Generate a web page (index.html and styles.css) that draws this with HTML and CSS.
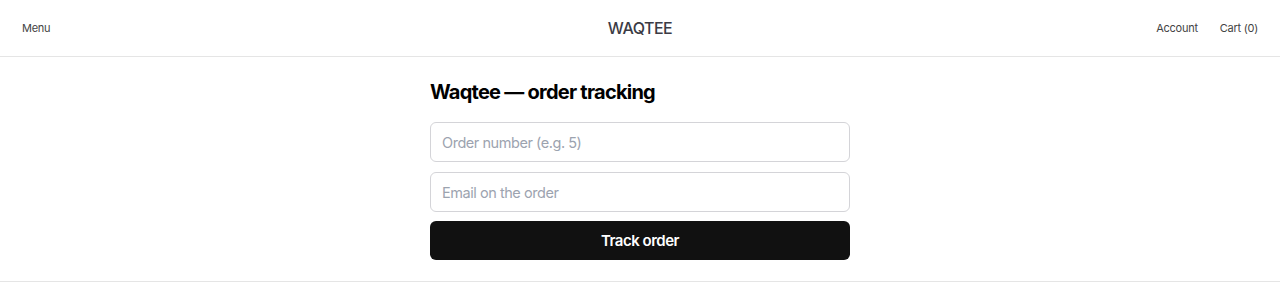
FILE: index.html
```html
<!DOCTYPE html>
<html lang="en">
<head>
    <meta charset="UTF-8">
    <meta name="viewport" content="width=device-width, initial-scale=1.0">
    <title>Waqtee — order tracking</title>
    <link rel="stylesheet" href="styles.css">
</head>
<body>

<header class="site-header">
    <a href="#" class="nav-link">Menu</a>
    <a href="#" class="logo">WAQTEE</a>
    <nav class="nav-right">
        <a href="#" class="nav-link">Account</a>
        <a href="#" class="nav-link">Cart (0)</a>
    </nav>
</header>

<main class="tracking">
    <h1>Waqtee — order tracking</h1>
    <form class="track-form">
        <input type="text" placeholder="Order number (e.g. 5)">
        <input type="email" placeholder="Email on the order">
        <button type="submit">Track order</button>
    </form>
</main>

<footer class="site-footer"></footer>

</body>
</html>
```

FILE: styles.css
```css
* {
    box-sizing: border-box;
}

body {
    margin: 0;
    font-family: Inter, "Noto Sans", sans-serif;
    color: #111;
    background: #fff;
}

/* Header */
.site-header {
    height: 57px;
    display: flex;
    align-items: center;
    justify-content: space-between;
    padding: 0 22px;
    border-bottom: 1px solid #e5e5e5;
    position: relative;
}

.nav-link {
    font-size: 11px;
    letter-spacing: -0.25px;
    color: #444;
    text-decoration: none;
}

.nav-right {
    display: flex;
    gap: 22px;
}

.logo {
    position: absolute;
    left: 50%;
    transform: translateX(-50%);
    font-size: 16px;
    font-weight: 500;
    letter-spacing: -0.5px;
    color: #3b3b45;
    text-decoration: none;
}

/* Formulaire de suivi */
.tracking {
    width: 420px;
    margin: 0 auto;
    padding: 23px 0 21px;
}

.tracking h1 {
    margin: 0 0 18px;
    font-size: 20px;
    line-height: 24px;
    font-weight: 700;
    letter-spacing: -0.75px;
    color: #000;
}

.track-form {
    display: flex;
    flex-direction: column;
}

.track-form input {
    height: 40px;
    margin-bottom: 10px;
    padding: 0 11px;
    border: 1px solid #d4d4d8;
    border-radius: 6px;
    font-family: inherit;
    font-size: 14.5px;
    letter-spacing: -0.45px;
    color: #111;
}

.track-form input:nth-of-type(2) {
    margin-bottom: 9px;
}

.track-form input::placeholder {
    color: #9ca3af;
}

.track-form button {
    height: 39px;
    border: none;
    border-radius: 6px;
    background: #111;
    color: #fff;
    font-family: inherit;
    font-size: 15px;
    font-weight: 600;
    letter-spacing: -0.5px;
    cursor: pointer;
}

.site-footer {
    border-top: 1px solid #e5e5e5;
}
```
